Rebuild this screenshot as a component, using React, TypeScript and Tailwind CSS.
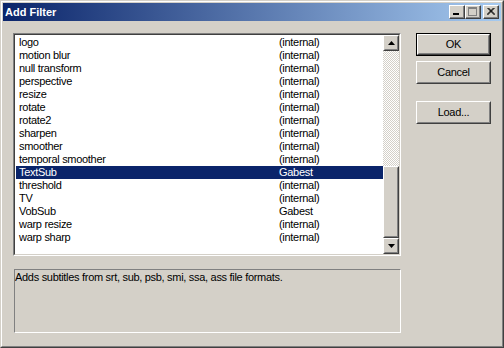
import React from "react";

const rows: [string, string][] = [
  ["logo", "(internal)"],
  ["motion blur", "(internal)"],
  ["null transform", "(internal)"],
  ["perspective", "(internal)"],
  ["resize", "(internal)"],
  ["rotate", "(internal)"],
  ["rotate2", "(internal)"],
  ["sharpen", "(internal)"],
  ["smoother", "(internal)"],
  ["temporal smoother", "(internal)"],
  ["TextSub", "Gabest"],
  ["threshold", "(internal)"],
  ["TV", "(internal)"],
  ["VobSub", "Gabest"],
  ["warp resize", "(internal)"],
  ["warp sharp", "(internal)"],
];

const selected = 10;

// raised 3d edge used by buttons
const Raised = ({ className, children }: any) => (
  <div className={`border border-t-white border-l-white border-r-[#404040] border-b-[#404040] ${className ?? ""}`}>
    <div className="w-full h-full border border-t-[#d4d0c8] border-l-[#d4d0c8] border-r-[#808080] border-b-[#808080] flex items-center justify-center">
      {children}
    </div>
  </div>
);

const CaptionBtn = ({ children, ml }: any) => (
  <div className={`w-[16px] h-[14px] bg-[#d4d0c8] border border-t-white border-l-white border-r-[#404040] border-b-[#404040] ${ml}`}>
    <div className="w-full h-full border-r border-b border-[#808080] flex items-center justify-center">
      {children}
    </div>
  </div>
);

const Arrow = ({ up }: { up?: boolean }) => (
  <svg width="7" height="4" viewBox="0 0 7 4">
    {up ? <path d="M3.5 0 L7 4 L0 4 Z" fill="#000" /> : <path d="M0 0 L7 0 L3.5 4 Z" fill="#000" />}
  </svg>
);

const PushButton = ({ label, isDefault, className }: any) => {
  const inner = (
    <Raised className="w-full h-full">
      <span className="text-[11px] tracking-[-0.3px] text-black">{label}</span>
    </Raised>
  );
  return (
    <div className={`w-[75px] h-[23px] bg-[#d4d0c8] ${className ?? ""}`}>
      {isDefault ? <div className="w-full h-full border border-black">{inner}</div> : inner}
    </div>
  );
};

export default function App() {
  return (
    <div
      className="w-[504px] h-[348px] border border-t-[#d4d0c8] border-l-[#d4d0c8] border-r-[#404040] border-b-[#404040] bg-[#d4d0c8]"
      style={{ fontFamily: '"Liberation Sans", Arial, sans-serif' }}
    >
      <div className="w-full h-full border border-t-white border-l-white border-r-[#808080] border-b-[#808080] p-px flex flex-col">
        {/* title bar */}
        <div className="h-[18px] flex items-center bg-[linear-gradient(to_right,#0a246a,#a6caf0)] pl-[2px] pr-[2px]">
          <span className="text-white font-bold text-[11px] leading-none">Add Filter</span>
          <div className="flex-1" />
          <CaptionBtn>
            <div className="w-[6px] h-[2px] bg-black mt-[5px] -ml-[1px]" />
          </CaptionBtn>
          <CaptionBtn>
            <svg width="9" height="9" viewBox="0 0 9 9">
              <rect x="0.5" y="0.5" width="8" height="8" fill="none" stroke="#808080" />
              <rect x="1" y="1" width="7" height="1" fill="#808080" />
              <path d="M1.5 9.5 H9.5 V1.5" fill="none" stroke="#ffffff" />
            </svg>
          </CaptionBtn>
          <CaptionBtn ml="ml-[2px]">
            <svg width="8" height="7" viewBox="0 0 8 7">
              <path d="M0.5 0 L7.5 7 M7.5 0 L0.5 7 M1.5 0 L8 6.5 M6.5 0 L0 6.5" stroke="#000" strokeWidth="1" fill="none" />
            </svg>
          </CaptionBtn>
        </div>

        {/* body */}
        <div className="flex flex-1 pl-[10px] pt-[12px] text-[11px] tracking-[-0.3px]">
          <div className="flex flex-col">
            {/* list box */}
            <div className="w-[388px] h-[223px] border border-t-[#808080] border-l-[#808080] border-r-white border-b-white">
              <div className="w-full h-full border border-t-[#404040] border-l-[#404040] border-r-[#d4d0c8] border-b-[#d4d0c8] bg-white flex">
                <div className="flex-1 pl-px pt-px">
                  {rows.map(([name, author], i) => (
                    <div
                      key={name}
                      className={`h-[13px] flex items-center pl-[3px] leading-none ${
                        i === selected ? "bg-[#0a246a] text-white" : "text-black"
                      }`}
                    >
                      <span className="w-[260px]">{name}</span>
                      <span>{author}</span>
                    </div>
                  ))}
                </div>
                {/* scrollbar */}
                <div className="w-[16px] flex flex-col">
                  <Raised className="w-[16px] h-[16px] bg-[#d4d0c8]">
                    <Arrow up />
                  </Raised>
                  <div className="h-[115px] bg-[repeating-conic-gradient(#ffffff_0%_25%,#d4d0c8_0%_50%)] bg-[length:2px_2px]" />
                  <Raised className="w-[16px] flex-1 bg-[#d4d0c8]" />
                  <Raised className="w-[16px] h-[16px] bg-[#d4d0c8]">
                    <Arrow />
                  </Raised>
                </div>
              </div>
            </div>

            {/* description */}
            <div className="mt-[13px] ml-px w-[387px] h-[64px] border border-t-[#808080] border-l-[#808080] border-r-white border-b-white pt-px">
              <p className="leading-[13px] text-black">
                Adds subtitles from srt, sub, psb, smi, ssa, ass file formats.
              </p>
            </div>
          </div>

          {/* buttons */}
          <div className="ml-[15px] flex flex-col">
            <PushButton label="OK" isDefault />
            <PushButton label="Cancel" className="mt-[5px]" />
            <PushButton label="Load..." className="mt-[17px]" />
          </div>
        </div>
      </div>
    </div>
  );
}
